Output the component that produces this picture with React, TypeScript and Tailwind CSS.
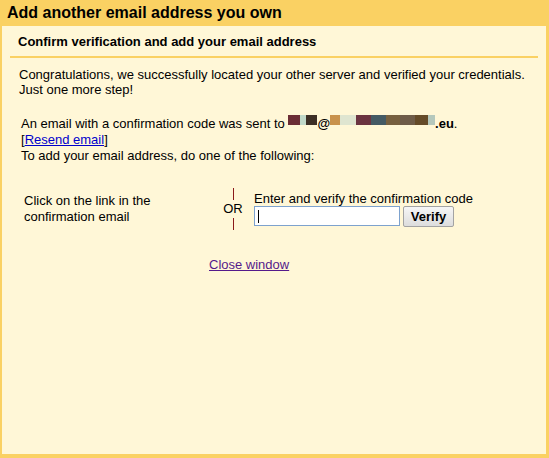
import React from 'react';

// blurred-out email address, drawn as coloured blocks
const BLOCKS_BEFORE: [string, number][] = [
  ['#6b2d35', 12],
  ['#c0d8c8', 6],
  ['#3d2f25', 11],
];
const BLOCKS_AFTER: [string, number][] = [
  ['#c8924c', 10],
  ['#dfe5d0', 16],
  ['#6b3440', 15],
  ['#445a64', 15],
  ['#77603f', 14],
  ['#6e5c48', 15],
  ['#654b28', 13],
  ['#b5c8bc', 7],
];

const Blocks: React.FC<{ items: [string, number][] }> = ({ items }) => (
  <>
    {items.map(([color, w], i) => (
      <span
        key={i}
        className="inline-block h-[10px] align-[3px]"
        style={{ backgroundColor: color, width: w }}
      />
    ))}
  </>
);

const App: React.FC = () => {
  return (
    <div className="flex h-[458px] w-[549px] flex-col bg-[#fad163] font-['Liberation_Sans',Arial,sans-serif] text-[13px] text-black">
      <div className="h-[26px] px-[7px] text-[16px] font-bold leading-[26px]">
        Add another email address you own
      </div>

      <div className="mb-[4px] ml-[2px] mr-[3px] flex-1 bg-[#fff7d7]">
        <div className="mx-[8px] border-b-2 border-[#fad163] px-[8px] pt-[8px] pb-[7px] font-bold leading-[15px]">
          Confirm verification and add your email address
        </div>

        <p className="mt-[9px] px-[17px] leading-[15px]">
          Congratulations, we successfully located your other server and verified your credentials.
          <br />
          Just one more step!
        </p>

        <div className="mt-[18px] px-[19px] leading-[16px]">
          <div>
            An email with a confirmation code was sent to{' '}
            <b>
              <Blocks items={BLOCKS_BEFORE} />@<Blocks items={BLOCKS_AFTER} />.eu
            </b>
            .
          </div>
          <div>
            [<a href="#" className="text-[#0000cc] underline">Resend email</a>]
          </div>
          <div>To add your email address, do one of the following:</div>
        </div>

        <div className="mt-[24px] flex items-center pl-[22px]">
          <div className="w-[194px] pr-[50px] leading-[16px]">
            Click on the link in the confirmation email
          </div>
          <div className="flex w-[30px] flex-col items-center">
            <div className="h-[12px] w-px bg-[#8b1a1a]" />
            <div className="h-[18px] leading-[18px]">OR</div>
            <div className="h-[12px] w-px bg-[#8b1a1a]" />
          </div>
          <div className="ml-[6px] flex flex-col">
            <div className="h-[14px] leading-[14px]">Enter and verify the confirmation code</div>
            <div className="flex items-start gap-[3px]">
              <div className="relative">
                <input
                  type="text"
                  className="h-[20px] w-[146px] border border-[#7da2ce] bg-white px-[3px] text-[13px] outline-none"
                />
                <span className="absolute left-[4px] top-[4px] h-[13px] w-px bg-black" />
              </div>
              <button className="h-[21px] w-[51px] rounded-[2px] border border-[#a3a3a3] bg-gradient-to-b from-[#f6f6f6] to-[#dddddd] text-[13px] font-bold leading-[19px]">
                Verify
              </button>
            </div>
          </div>
        </div>

        <div className="mt-[27px] pl-[207px] leading-[15px]">
          <a href="#" className="text-[#551a8b] underline">Close window</a>
        </div>
      </div>
    </div>
  );
};

export default App;
